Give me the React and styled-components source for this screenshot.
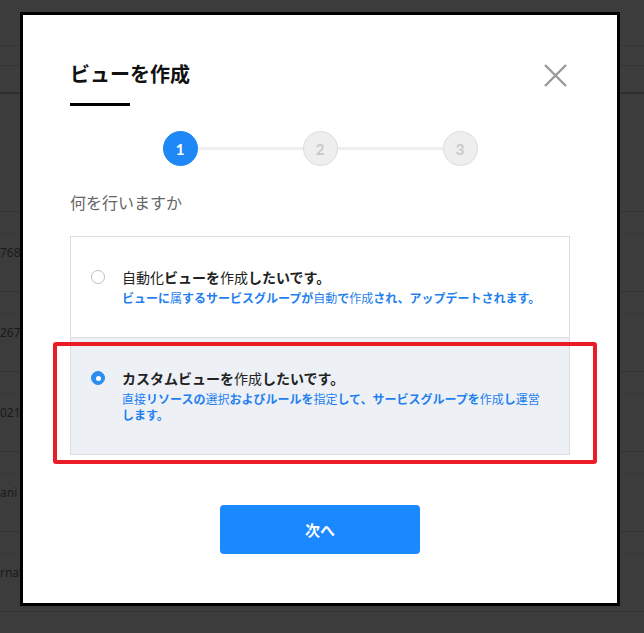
import React from 'react'
import styled, { createGlobalStyle } from 'styled-components'

const GlobalStyle = createGlobalStyle`
  html, body { margin: 0; padding: 0; }
  body {
    background: #3c3c3c;
    font-family: "Noto Sans CJK JP", "Noto Sans", sans-serif;
  }
  * { box-sizing: border-box; }
`

// dimmed page behind the dialog
const Page = styled.div`
  position: relative;
  width: 644px;
  height: 633px;
  overflow: hidden;
  background: #3c3c3c;
`

const Band = styled.div`
  height: ${(p) => p.$h}px;
  border-bottom: ${(p) => (p.$thick ? '2px solid #2d2d2d' : '1px solid #343434')};
`

const Record = styled.div`
  height: 80px;
  display: flex;
  flex-direction: column;
  border-bottom: 1px solid #333;
`

const RecordTop = styled.div`
  height: 22px;
  border-bottom: 1px solid #383838;
`

const RecordText = styled.div`
  flex: 1;
  display: flex;
  align-items: center;
  padding-bottom: 20px;
  font-family: "Noto Sans", sans-serif;
  font-size: 12px;
  color: #1a1a1a;
  white-space: nowrap;
`

const Modal = styled.div`
  position: absolute;
  left: 20px;
  top: 12px;
  width: 600px;
  height: 594px;
  background: #fff;
  border: 3px solid #000;
  padding: 46px 47px 0 47px;
  display: flex;
  flex-direction: column;
`

const Header = styled.div`
  display: flex;
  justify-content: space-between;
  align-items: center;
`

const Title = styled.h2`
  margin: 0;
  font-size: 20px;
  line-height: 26px;
  font-weight: 700;
  color: #111;
`

const Close = styled.button`
  display: flex;
  margin: 3px 3px 0 0;
  padding: 0;
  border: none;
  background: none;
  cursor: pointer;
`

const TitleBar = styled.div`
  width: 60px;
  height: 3px;
  margin-top: 16px;
  background: #000;
`

const Stepper = styled.div`
  display: flex;
  align-items: center;
  justify-content: center;
  margin-top: 25px;
`

const StepDot = styled.div`
  width: 35px;
  height: 35px;
  border-radius: 50%;
  display: flex;
  align-items: center;
  justify-content: center;
  font-family: Lato, "Noto Sans", sans-serif;
  font-weight: 700;
  font-size: 15px;
  background: ${(p) => (p.$active ? '#1e88f6' : '#eeeeee')};
  border: 1px solid ${(p) => (p.$active ? '#1e88f6' : '#dddddd')};
  color: ${(p) => (p.$active ? '#fff' : '#c8c8c8')};
`

const Connector = styled.div`
  width: 105px;
  height: 3px;
  background: #eeeeee;
`

const Question = styled.p`
  margin: 25px 0 0;
  font-size: 16px;
  line-height: 22px;
  color: #666;
`

const Options = styled.div`
  margin-top: 23px;
  display: flex;
  flex-direction: column;
`

const Option = styled.label`
  position: relative;
  display: flex;
  align-items: flex-start;
  padding: 30px 20px 31px 20px;
  border: 1px solid #dddddd;
  background: ${(p) => (p.$active ? '#edf1f6' : '#fff')};
  cursor: pointer;

  & + & {
    border-top: none;
  }
`

const Radio = styled.span`
  flex: none;
  width: 14px;
  height: 14px;
  margin: 3px 17px 0 0;
  border-radius: 50%;
  display: flex;
  align-items: center;
  justify-content: center;
  border: 1px solid ${(p) => (p.$checked ? '#2d8cf0' : '#bfbfbf')};
  background: ${(p) => (p.$checked ? '#2d8cf0' : '#fff')};

  &::after {
    content: '';
    display: ${(p) => (p.$checked ? 'block' : 'none')};
    width: 5px;
    height: 5px;
    border-radius: 50%;
    background: #fff;
  }
`

const OptionText = styled.div`
  width: 427px;
`

const OptionTitle = styled.div`
  font-size: 14px;
  line-height: 20px;
  font-weight: 700;
  color: #222;
`

const OptionDesc = styled.div`
  margin-top: 3px;
  font-size: 12px;
  line-height: 16px;
  font-weight: 700;
  color: #1f7fee;
`

// kanji render in the regular face, kana in the bold one
const Kanji = styled.span`
  font-weight: 400;
`

const Highlight = styled.div`
  position: absolute;
  left: -18px;
  top: 4px;
  right: -28px;
  bottom: -10px;
  border: 4px solid #ec1c27;
  border-radius: 3px;
  pointer-events: none;
`

const NextButton = styled.button`
  align-self: center;
  width: 200px;
  height: 49px;
  margin-top: 50px;
  border: none;
  border-radius: 4px;
  background: #1a88ff;
  color: #fff;
  font-family: "Noto Sans CJK JP", sans-serif;
  font-size: 15px;
  font-weight: 700;
  cursor: pointer;
`

function Mixed({ text }) {
  return text.split(/([\u4e00-\u9fff]+)/).map((part, i) =>
    /[\u4e00-\u9fff]/.test(part) ? <Kanji key={i}>{part}</Kanji> : part
  )
}

const records = ['7683', '2671', '0214', 'ani', 'rnat']

const options = [
  {
    title: '自動化ビューを作成したいです。',
    desc: 'ビューに属するサービスグループが自動で作成され、アップデートされます。',
  },
  {
    title: 'カスタムビューを作成したいです。',
    desc: '直接リソースの選択およびルールを指定して、サービスグループを作成し運営します。',
  },
]

export default function App() {
  const selected = 1
  return (
    <>
      <GlobalStyle />
      <Page>
        <Band $h={46} />
        <Band $h={20} />
        <Band $h={28} $thick />
        <Band $h={118} />
        {records.map((r) => (
          <Record key={r}>
            <RecordTop />
            <RecordText>{r}</RecordText>
          </Record>
        ))}

        <Modal>
          <Header>
            <Title>ビューを作成</Title>
            <Close aria-label="閉じる">
              <svg width="23" height="23" viewBox="0 0 23 23">
                <path d="M1 1L22 22M22 1L1 22" stroke="#999" strokeWidth="2.4" fill="none" />
              </svg>
            </Close>
          </Header>
          <TitleBar />

          <Stepper>
            <StepDot $active>1</StepDot>
            <Connector />
            <StepDot>2</StepDot>
            <Connector />
            <StepDot>3</StepDot>
          </Stepper>

          <Question>何を行いますか</Question>

          <Options>
            {options.map((o, i) => (
              <Option key={o.title} $active={i === selected}>
                <Radio $checked={i === selected} />
                <OptionText>
                  <OptionTitle><Mixed text={o.title} /></OptionTitle>
                  <OptionDesc><Mixed text={o.desc} /></OptionDesc>
                </OptionText>
                {i === selected && <Highlight />}
              </Option>
            ))}
          </Options>

          <NextButton>次へ</NextButton>
        </Modal>
      </Page>
    </>
  )
}
